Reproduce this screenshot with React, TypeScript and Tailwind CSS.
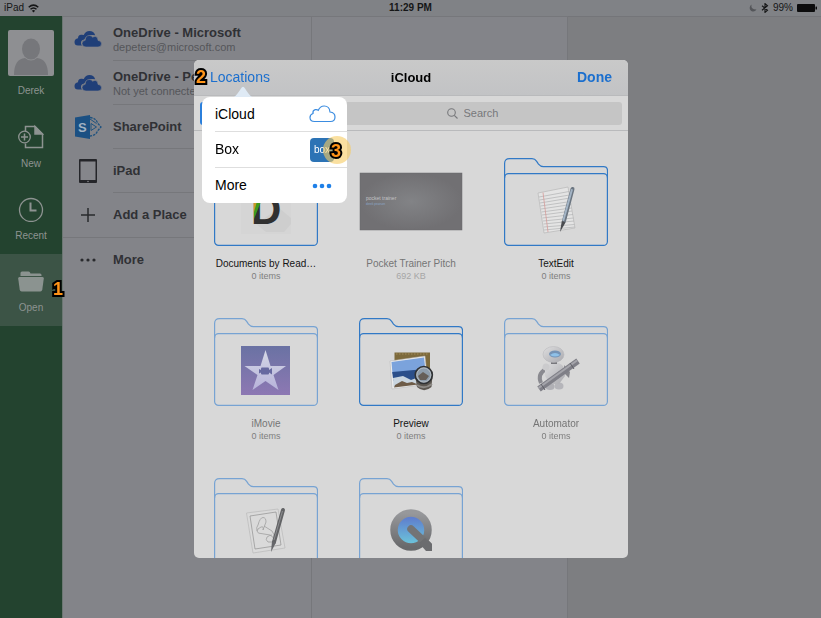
import React from 'react';

const navItems = [
  { id: 'new', label: 'New' },
  { id: 'recent', label: 'Recent' },
  { id: 'open', label: 'Open' },
];

const places = [
  { id: 'onedrive-work', name: 'OneDrive - Microsoft', detail: 'depeters@microsoft.com' },
  { id: 'onedrive-home', name: 'OneDrive - Personal', detail: 'Not yet connected' },
  { id: 'sharepoint', name: 'SharePoint' },
  { id: 'ipad', name: 'iPad' },
  { id: 'add', name: 'Add a Place' },
  { id: 'more', name: 'More' },
];

const files = [
  { id: 'documents', name: 'Documents by Read…', detail: '0 items', enabled: true },
  { id: 'pitch', name: 'Pocket Trainer Pitch', detail: '692 KB', enabled: false },
  { id: 'textedit', name: 'TextEdit', detail: '0 items', enabled: true },
  { id: 'imovie', name: 'iMovie', detail: '0 items', enabled: false },
  { id: 'preview', name: 'Preview', detail: '0 items', enabled: true },
  { id: 'automator', name: 'Automator', detail: '0 items', enabled: false },
  { id: 'script', name: '', detail: '', enabled: false },
  { id: 'quicktime', name: '', detail: '', enabled: false },
];

const StepNumber = ({ value, className }: { value: number; className: string }) => (
  <span
    className={`absolute z-20 text-[18px] leading-5 font-bold text-[#ff9418] [-webkit-text-stroke:4px_#000] [paint-order:stroke_fill] ${className}`}
  >
    {value}
  </span>
);

const NavIcon = ({ id }: { id: string }) => {
  if (id === 'new') {
    return (
      <svg width="26" height="26" viewBox="0 0 26 26" fill="none" stroke="#8d9391" strokeWidth="1.5">
        <path d="M7.5 7V2.5H17L24.5 10V23.5H7.5V19.5" />
        <path d="M17 2.5V10H24.5Z" fill="#8d9391" />
        <circle cx="6.500" cy="13" r="5.800" strokeWidth="1.3" />
        <path d="M6.500 9.500V16.500M3 13H10" />
      </svg>
    );
  }
  if (id === 'recent') {
    return (
      <svg width="26" height="26" viewBox="0 0 26 26" fill="none" stroke="#8d9391">
        <circle cx="13" cy="14" r="11.5" strokeWidth="1.3" />
        <path d="M12.500 6.500V14.500H18.500" strokeWidth="2" />
      </svg>
    );
  }
  return (
    <svg width="26" height="26" viewBox="0 0 26 26" fill="#8b9390">
      <path d="M2.500 8V5q0-1.500 1.500-1.500H10.500q1 0 1.500 1l.5 1H22q1.500 0 1.500 1.500V8Z" />
      <path d="M1.500 9H24.500q1.500 0 1.300 1.500L24.300 21.500q-.3 2-2 2H3.700q-1.700 0-2-2L.2 10.500Q0 9 1.500 9Z" />
    </svg>
  );
};

const PlaceIcon = ({ id }: { id: string }) => {
  switch (id) {
    case 'onedrive-work':
    case 'onedrive-home':
      return (
        <svg width="28" height="18" viewBox="0 0 28 18" fill="#203f78">
          <path d="M8 15.500H4Q.5 15.500.5 12 .5 9 4 8.200 4 5 7.200 4.700 9 4.600 9.800 5.100 11.500 1 15.500 1 19.700 1 21.200 5.200 13.300 4 10.200 9.500 6.800 10.200 7 13 7.100 14.600 8 15.500Z" />
          <path
            d="M12 17Q8 17 8 13.600 8 10.600 11.200 10.300 11.300 5.500 15.500 5.500 17.500 5.500 18.700 7.200 20 6.200 21.700 6.600 24 7.200 24 10.400 27.500 10.600 27.500 13.700 27.500 17 24 17Z"
            stroke="#838489"
            strokeWidth=".6"
          />
        </svg>
      );
    case 'sharepoint':
      return (
        <svg width="28" height="26" viewBox="0 0 28 26" fill="none" stroke="#1e527f">
          <path d="M16 3.500Q22 4 23.500 9L27 13 23.500 17Q22 21.500 16 22" strokeWidth="1.300" strokeDasharray="2.500 1" />
          <path d="M17 9.500L22.500 13 17 16.500ZM16 5L22.500 9.500" strokeWidth="1" />
          <path d="M1 3.500L16 1V25L1 22.500Z" fill="#1b5083" stroke="none" />
          <text x="4" y="18" fill="#a3b2c2" stroke="none" fontSize="13" fontWeight="bold">S</text>
        </svg>
      );
    case 'ipad':
      return (
        <svg width="18" height="24" viewBox="0 0 18 24">
          <rect width="18" height="24" rx="1" fill="#242529" />
          <rect x="1.500" y="2.500" width="15" height="18.500" fill="#85868b" />
          <circle cx="9" cy="22.500" r=".8" fill="#85868b" />
        </svg>
      );
    case 'add':
      return (
        <svg width="14" height="14" viewBox="0 0 14 14" stroke="#292a2d" strokeWidth="1.500">
          <path d="M7 0V14M0 7H14" />
        </svg>
      );
    default:
      return (
        <svg width="16" height="4" viewBox="0 0 16 4" fill="#292a2d">
          <circle cx="2" cy="2" r="1.600" />
          <circle cx="8" cy="2" r="1.600" />
          <circle cx="14" cy="2" r="1.600" />
        </svg>
      );
  }
};

const AppArtwork = ({ id }: { id: string }) => {
  switch (id) {
    case 'documents':
      return (
        <g>
          <rect x="27" y="26" width="50" height="50" fill="#d5d5d5" />
          <path d="M42 66L52 74H70L77 66V60L65 50Z" fill="#cecece" />
          <text x="37" y="66" fontSize="42" fontWeight="bold" fill="#303030">D</text>
          <path d="M40 36H50L40 61Z" fill="#3f9a1c" />
          <path d="M40 36H45L40 54Z" fill="#c99a26" />
        </g>
      );
    case 'textedit':
      return (
        <g>
          <path d="M34 35L64 29 71 70 40 75Z" fill="#e4e4e4" stroke="#b8b8b8" strokeWidth=".7" />
          <path
            d="M35 39L65 33.500M35.500 42L65.500 37M36 45L66 40M36.500 48L66.500 43.500M37 51L67 46.500M37.500 54L67.500 50M38 57L68 53M38.500 60L69 56.500M39 63L69.500 60M39.500 66L70 63M39.800 69L70.500 66.500M40 72L70.800 69"
            stroke="#b0b1b3"
            strokeWidth=".7"
          />
          <path d="M39 34.500L44 74" stroke="#d59b98" strokeWidth=".8" />
          <path d="M68.500 31L60 63" stroke="#6b7580" strokeWidth="4" strokeLinecap="round" />
          <path d="M67.800 32L59.500 62" stroke="#a3b4c5" strokeWidth="2" strokeLinecap="round" />
          <path d="M57.800 63L61.500 64.500 56 74Z" fill="#4a4c50" />
        </g>
      );
    case 'imovie':
      return (
        <g>
          <rect x="27" y="28" width="49" height="49" fill="url(#movie)" />
          <path d="M51.500 32L56.500 48 72 48 59.500 57 64.500 72 51.500 63 38.500 72 43.500 57 30.500 48 46.500 48Z" fill="url(#star)" />
          <rect x="47" y="49.500" width="8" height="7" rx="1" fill="#6769a0" />
          <path d="M47 52L45 51V55.500L47 54.500ZM55 52L58 50V56.500L55 54.500Z" fill="#6769a0" />
        </g>
      );
    case 'preview':
      return (
        <g>
          <rect x="35.500" y="34.500" width="35.500" height="20" fill="#7d6a3c" />
          <path d="M37 36H70" stroke="#a28b58" strokeDasharray="1.500 1.500" />
          <path d="M31 43L66 38 69 66 33 71Z" fill="#ececec" stroke="#b2b2b2" strokeWidth=".5" />
          <path d="M32.500 44L65 39.500 66.500 53 33.500 56Z" fill="#7ba3dc" />
          <path d="M33.200 54L66 51 67.500 62 34.300 63Z" fill="#2b4f8a" />
          <path d="M34 60L44 58 52 62 60 59 67 61 67.500 65 34.500 69Z" fill="#c9d5df" />
          <path d="M36 67L43 63 48 65 53 64 59 66.500 35 69.500Z" fill="#6e5c48" />
          <path d="M56 57L58 69Q65 75.500 72.500 69L73.500 57Z" fill="#5d5852" />
          <path d="M58 67Q65 72 73 66" stroke="#8d8a86" strokeWidth="2" fill="none" />
          <circle cx="64.800" cy="57" r="8.500" fill="#8d9cab" stroke="#2f3133" strokeWidth="1.700" />
          <circle cx="64.800" cy="57" r="7" fill="none" stroke="#b3bac0" />
          <path d="M59 58L64 54 70 58 67 62H61Z" fill="#655e58" />
        </g>
      );
    case 'automator':
      return (
        <g>
          <path d="M42 51Q33 56 37 65" fill="none" stroke="#8a8a90" strokeWidth="4" />
          <ellipse cx="46" cy="68.500" rx="4.500" ry="3.500" fill="#b0b0b5" />
          <ellipse cx="55" cy="68" rx="4.500" ry="3.500" fill="#b5b5ba" />
          <path d="M41 48Q50 40 59 48L61 58 55 66H46L41 58Z" fill="url(#robot)" />
          <circle cx="42" cy="49" r="3.500" fill="#cbcbcd" />
          <rect x="47" y="42" width="6" height="4" fill="#77777c" />
          <ellipse cx="49.500" cy="36.500" rx="10.500" ry="8" fill="url(#robot)" stroke="#b5b5b8" strokeWidth=".5" />
          <ellipse cx="51" cy="36" rx="6" ry="3.500" fill="#7593b5" />
          <path d="M46 37Q51 33 56 37 51 40 46 37Z" fill="#8fc1e8" />
          <path d="M60 47L66 54 65 60 61 56Z" fill="#85858b" />
          <path d="M35 71L74 43" stroke="#7f7f87" strokeWidth="6" />
          <path d="M34.500 70L73 42.500" stroke="#a5a5ab" strokeWidth="2" />
          <path d="M37 66L41 72M66 45L70 51" stroke="#5f5f67" strokeWidth="1" />
        </g>
      );
    case 'script':
      return (
        <g fill="none">
          <path d="M32.500 35L64 31 71 70 39 75Z" fill="#dadada" stroke="#b9b9b9" strokeWidth=".7" />
          <path d="M36 38L62 34 67 67 41 71Z" stroke="#909090" strokeWidth=".7" />
          <path
            d="M49 52L52 44Q52 39.500 49 39.500 46 39.500 44 47 42 49 43 53 44 56 47 55.500L56 57Q60 59 60 62 58 65 54 64 51 62 53 59 56 57 58 57M49 52Q50 48 47 49 43 51 43 53M50 48L58 53Q61 56 60 62"
            stroke="#a0a0a0"
            strokeWidth=".8"
          />
          <path d="M69 32L60 64" stroke="#626365" strokeWidth="4" strokeLinecap="round" />
          <path d="M68.500 33L60 62" stroke="#8c8d90" strokeWidth="1" />
          <path d="M58 63L62 64.500 57 74Z" fill="#66676a" />
        </g>
      );
    default:
      return (
        <g>
          <circle cx="52" cy="52" r="17" fill="url(#quick)" stroke="url(#ring)" strokeWidth="7.500" />
          <path d="M52 51L69 67" stroke="#737476" strokeWidth="7.500" strokeLinecap="round" />
          <path d="M60 65L66 60 73 66V73H67Z" fill="#6b6c6f" />
        </g>
      );
  }
};

const FileArt = ({ id, enabled }: { id: string; enabled: boolean }) => {
  if (id === 'pitch') {
    return (
      <svg width="104" height="88" viewBox="0 0 104 88">
        <rect x="1" y="15" width="102" height="57" fill="url(#slide)" stroke="#69696c" strokeWidth=".5" />
        <text x="7" y="42" fontSize="5" fill="#c3c3c6">pocket trainer</text>
        <text x="7" y="47" fontSize="3" fill="#8ba6c6">derek pearson</text>
      </svg>
    );
  }
  return (
    <svg width="104" height="88" viewBox="0 0 104 88">
      <g fill="none" stroke={enabled ? '#3179c6' : '#77a3d3'} strokeWidth="1.200">
        <path d="M.6 20V5.500Q.6.600 5.500.600H28q3 0 4.500 2.500l2 3q2 2.500 5 2.500H99.500q4 0 4 4V20" />
        <rect x=".6" y="15.600" width="102.800" height="71.800" rx="4" />
      </g>
      <AppArtwork id={id} />
    </svg>
  );
};

const Gradients = () => (
  <svg className="absolute size-0" aria-hidden="true">
    <defs>
      <linearGradient id="movie" x1="0" y1="0" x2="0" y2="1">
        <stop offset="0" stopColor="#6a72a3" />
        <stop offset="1" stopColor="#8d78b3" />
      </linearGradient>
      <linearGradient id="star" x1="0" y1="0" x2="0" y2="1">
        <stop offset="0" stopColor="#d5d8e6" />
        <stop offset="1" stopColor="#b7b3da" />
      </linearGradient>
      <linearGradient id="robot" x1="0" y1="0" x2="1" y2="1">
        <stop offset="0" stopColor="#dededf" />
        <stop offset="1" stopColor="#a9a9ae" />
      </linearGradient>
      <linearGradient id="quick" x1="0" y1="0" x2="0" y2="1">
        <stop offset="0.150" stopColor="#5f7fce" />
        <stop offset="0.850" stopColor="#6bbfd9" />
      </linearGradient>
      <linearGradient id="ring" x1="0" y1="0" x2="0" y2="1">
        <stop offset="0" stopColor="#97989b" />
        <stop offset="1" stopColor="#68696b" />
      </linearGradient>
      <radialGradient id="slide">
        <stop offset="0" stopColor="#828386" />
        <stop offset="1" stopColor="#717073" />
      </radialGradient>
    </defs>
  </svg>
);

const StatusBar = () => (
  <header className="grid h-4 grid-cols-3 items-center bg-[#808286] px-1 text-[10px] leading-4 text-[#151617]">
    <div className="flex items-center gap-1">
      <span>iPad</span>
      <svg width="11" height="9" viewBox="0 0 11 9" fill="none" stroke="#151617" strokeWidth="1.500">
        <path d="M.7 3.300Q5.500-1 10.300 3.300M2.500 5.300Q5.500 2.700 8.500 5.300" />
        <path d="M3.900 6.700L5.500 8.500 7.100 6.700Q5.500 5.500 3.900 6.700Z" fill="#151617" stroke="none" />
      </svg>
    </div>
    <div className="text-center font-bold">11:29 PM</div>
    <div className="flex items-center justify-end gap-1">
      <svg width="8" height="8" viewBox="0 0 8 8" fill="#54565a">
        <path d="M2.500.5Q1.500 5.500 7.500 5.500 6 8 3.500 7.500.5 6.500.7 3.500 1 1.500 2.500.5Z" />
      </svg>
      <svg width="8" height="10" viewBox="0 0 8 10" fill="none" stroke="#151617" strokeWidth="1.100">
        <path d="M1 2.700L6.500 7.200 4 9.400V.6L6.500 2.800 1 7.300" />
      </svg>
      <span>99%</span>
      <svg width="20" height="8" viewBox="0 0 20 8" fill="#0c0c0d">
        <rect width="18" height="8" rx="1" />
        <rect x="18.500" y="2.500" width="1.500" height="3" rx=".5" />
      </svg>
    </div>
  </header>
);

const Sidebar = () => (
  <nav className="flex w-[63px] shrink-0 flex-col border-r border-[#6c7773] bg-[#23432f] text-[10px] text-[#8d9391]">
    <div className="flex h-[94px] flex-col items-center pt-[14px]">
      <svg width="46" height="46" viewBox="0 0 46 46">
        <rect width="46" height="46" rx="2" fill="#8e8f92" />
        <ellipse cx="23" cy="19" rx="9" ry="10.500" fill="#76777b" />
        <path d="M6 45Q6 29 17 28 23 33 29 28 40 29 40 45Z" fill="#76777b" />
      </svg>
      <span className="mt-[7px] leading-4">Derek</span>
    </div>
    {navItems.map((item) => (
      <button
        key={item.id}
        className={`relative flex h-[72px] flex-col items-center pt-[14px] ${item.id === 'open' ? 'bg-[#3c5446]' : ''}`}
      >
        <NavIcon id={item.id} />
        <span className="mt-[6px] leading-4">{item.label}</span>
        {item.id === 'open' && <StepNumber value={1} className="-right-px top-[25px]" />}
      </button>
    ))}
  </nav>
);

const Places = () => (
  <section className="w-[249px] shrink-0 border-t border-r border-[#76777b]">
    {places.map((place) => (
      <button
        key={place.id}
        className={`flex w-full text-left ${place.id === 'add' ? 'border-b border-[#76777b]' : ''}`}
      >
        <span className="flex h-11 w-[50px] shrink-0 items-center justify-center">
          <PlaceIcon id={place.id} />
        </span>
        <span
          className={`flex h-11 flex-1 flex-col justify-center whitespace-nowrap ${place.id === 'add' || place.id === 'more' ? '' : 'border-b border-[#76777b]'}`}
        >
          <span className="text-[13px] leading-4 font-bold text-[#303135]">{place.name}</span>
          {place.detail && <span className="text-[11px] leading-3 text-[#55565a]">{place.detail}</span>}
        </span>
      </button>
    ))}
  </section>
);

const LocationsMenu = () => (
  <div className="absolute top-[26px] left-[8px] z-10 w-[145px] text-[14px] text-black">
    <svg className="ml-[32px] block" width="18" height="11" viewBox="0 0 18 11">
      <path d="M0 11Q3 9 7 2.500 9-1 11 2.500 15 9 18 11Z" fill="#dfeaf5" />
    </svg>
    <div className="rounded-lg bg-white pl-[13px]">
      <button className="flex h-[35px] w-full items-center justify-between border-b border-[#dedede] pr-[11px]">
        iCloud
        <svg width="27" height="18" viewBox="0 0 27 18" fill="none" stroke="#3b8ce0" strokeWidth="1.200">
          <path d="M5.500 16.500Q1 16.500 1 12.500 1 9.500 4 8.500 3.500 5.500 6.200 4.700 8 4.300 9.300 5.300 11 1 15.200 1 20.500 1 21 7 26 7.500 26 12 26 16.500 21.500 16.500Z" />
        </svg>
      </button>
      <button className="relative flex h-9 w-full items-center justify-between border-b border-[#dedede] pr-[13px]">
        Box
        <span className="flex size-6 items-center justify-center rounded-[4px] bg-[#2c73b5] text-[10px] leading-3 text-white">
          box
        </span>
        <span className="absolute top-[4px] -right-1 size-7 rounded-full bg-[#f7cb61]/60" />
        <StepNumber value={3} className="top-[9px] right-[6px]" />
      </button>
      <button className="flex h-[35px] w-full items-center justify-between pr-[15px]">
        More
        <svg width="20" height="6" viewBox="0 0 20 6" fill="#1f80e8">
          <circle cx="3" cy="3" r="2.300" />
          <circle cx="10" cy="3" r="2.300" />
          <circle cx="17" cy="3" r="2.300" />
        </svg>
      </button>
    </div>
  </div>
);

const PickerDialog = () => (
  <div
    role="dialog"
    aria-label="iCloud"
    className="relative flex h-full w-[434px] flex-col rounded-[5px] bg-[#d8d8d8]"
  >
    <StepNumber value={2} className="top-[7px] left-[2px]" />
    <div className="relative grid h-9 shrink-0 grid-cols-3 items-center rounded-t-[5px] border-b border-[#b9babc] bg-linear-to-b from-[#c9c9c9] to-[#c2c3c5] px-4 text-[14px]">
      <button className="justify-self-start text-[#1b6fce]">Locations</button>
      <h1 className="text-center text-[13px] font-bold text-black">iCloud</h1>
      <button className="justify-self-end font-bold text-[#1b6fce]">Done</button>
      <LocationsMenu />
    </div>
    <div className="flex h-[35px] shrink-0 items-center gap-2 border-b border-[#b9babc] px-[6px]">
      <div className="h-[23px] w-[116px] rounded-[3px] bg-[#2b7fdb]" />
      <label className="flex h-[23px] flex-1 items-center justify-center gap-[6px] rounded-[3px] bg-[#c5c5c5]">
        <svg width="11" height="11" viewBox="0 0 11 11" fill="none" stroke="#77787b" strokeWidth="1.100">
          <circle cx="4.500" cy="4.500" r="3.800" />
          <path d="M7.300 7.300L10.500 10.500" />
        </svg>
        <input
          type="text"
          aria-label="Search"
          placeholder="Search"
          className="w-9 bg-transparent text-[11px] leading-4 text-[#303030] outline-none placeholder:text-[#77787b]"
        />
      </label>
    </div>
    <div className="min-h-0 flex-1 overflow-hidden rounded-b-[5px] px-5 pt-[27px]">
      <div className="grid grid-cols-[104px_104px_104px] justify-between gap-y-[35px]">
        {files.map((file) => (
          <button key={file.id} className="flex flex-col items-center whitespace-nowrap">
            <FileArt id={file.id} enabled={file.enabled} />
            <span
              className={`mt-[11px] text-[10px] leading-[13px] ${file.enabled ? 'text-[#141414]' : 'text-[#757575]'}`}
            >
              {file.name}
            </span>
            <span
              className={`text-[9px] leading-[13px] ${file.id === 'pitch' ? 'text-[#a6a6a6]' : 'text-[#7e7e7e]'}`}
            >
              {file.detail}
            </span>
          </button>
        ))}
      </div>
    </div>
  </div>
);

const App = () => {
  return (
    <div className="flex min-h-screen flex-col bg-[#838489] font-['Liberation_Sans',Arial,sans-serif]">
      <Gradients />
      <StatusBar />
      <main className="flex flex-1">
        <Sidebar />
        <Places />
        <section className="w-64 shrink-0 border-t border-r border-[#76777b]" />
        <section className="flex-1 border-t border-[#747579] bg-[#7d7e81]" />
      </main>
      <div className="fixed inset-0 flex justify-center py-[60px] pl-px">
        <PickerDialog />
      </div>
    </div>
  );
};

export default App;
